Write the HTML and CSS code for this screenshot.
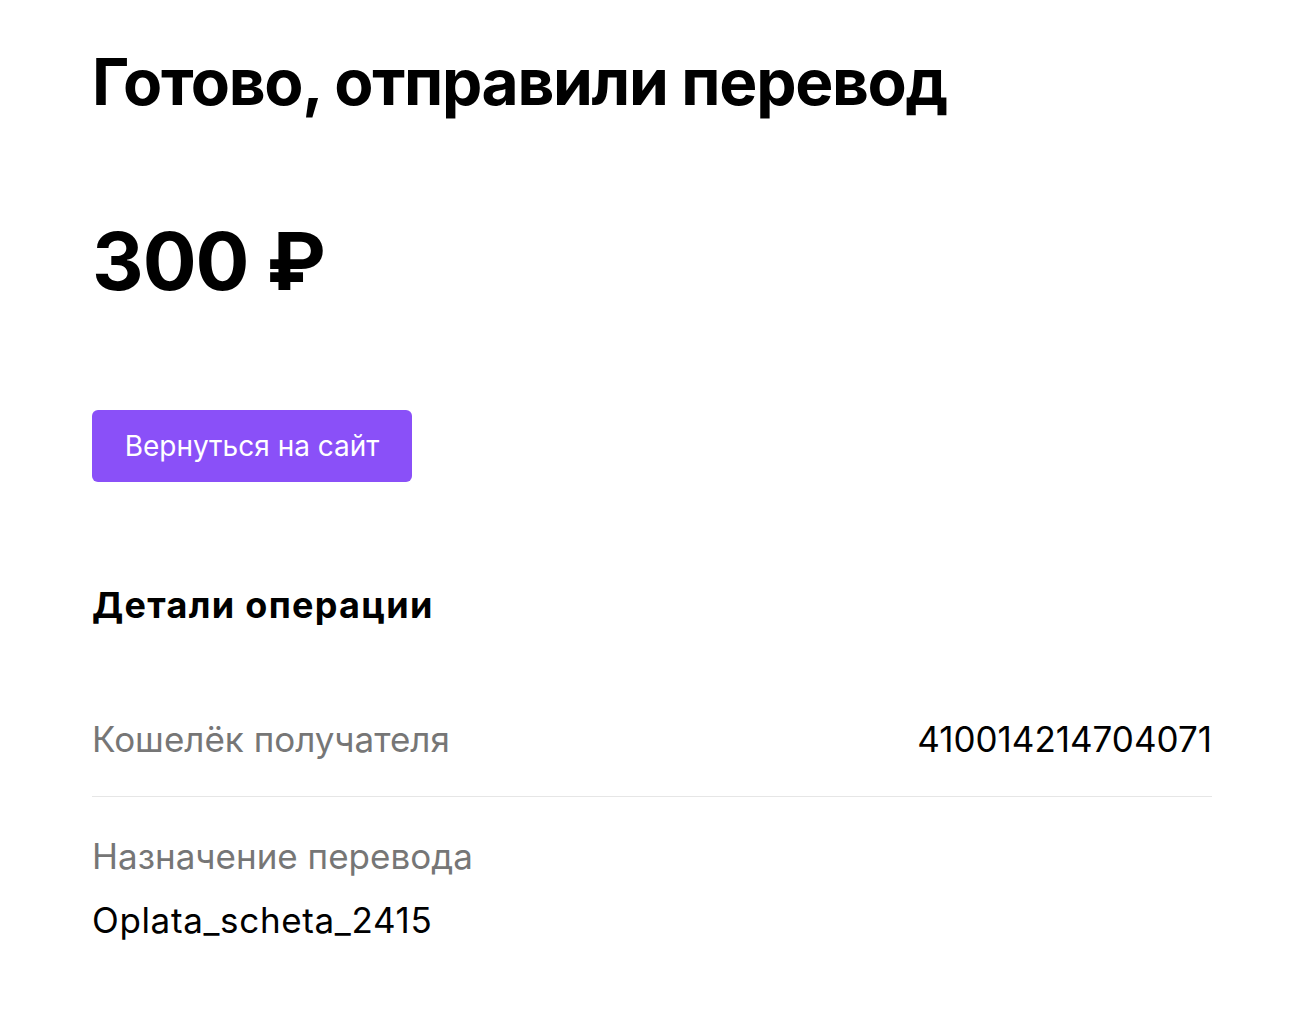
FILE: index.html
```html
<!DOCTYPE html>
<html lang="ru">
<head>
    <meta charset="UTF-8">
    <meta name="viewport" content="width=device-width, initial-scale=1.0">
    <title>Перевод отправлен</title>
    <link rel="stylesheet" href="styles.css">
</head>
<body>
    <main class="page">
        <h1 class="title">Готово, отправили перевод</h1>

        <div class="amount">300 ₽</div>

        <a class="back-button" href="#">Вернуться на сайт</a>

        <section class="details">
            <h2 class="details-title">Детали операции</h2>

            <div class="detail-row detail-row--inline">
                <span class="detail-label">Кошелёк получателя</span>
                <span class="detail-value">410014214704071</span>
            </div>

            <div class="detail-row">
                <div class="detail-label">Назначение перевода</div>
                <div class="detail-value detail-value--purpose">Oplata_scheta_2415</div>
            </div>
        </section>
    </main>
</body>
</html>
```

FILE: styles.css
```css
body {
    margin: 0;
    background-color: #fff;
    color: #000;
    font-family: Inter, "Noto Sans", sans-serif;
}

.page {
    width: 1120px;
    padding: 42px 0 40px 92px;
}

.title {
    margin: 0;
    font-size: 64px;
    line-height: 80px;
    font-weight: 700;
    letter-spacing: -1.3px;
}

.amount {
    margin-top: 91px;
    font-size: 80px;
    line-height: 96px;
    font-weight: 700;
    letter-spacing: -1px;
}

/* Primary button */
.back-button {
    display: flex;
    align-items: center;
    justify-content: center;
    width: 320px;
    height: 72px;
    margin-top: 101px;
    border-radius: 6px;
    background-color: #8a50f8;
    color: #fff;
    font-size: 28px;
    text-decoration: none;
}

.details {
    margin-top: 101px;
}

.details-title {
    margin: 0;
    font-size: 36px;
    line-height: 44px;
    font-weight: 700;
    letter-spacing: 1.3px;
}

.detail-row {
    padding: 37px 0 20px;
}

.detail-row--inline {
    display: flex;
    justify-content: space-between;
    padding: 90px 0 35px;
    border-bottom: 1px solid #e6e6e6;
}

.detail-label {
    color: #767676;
    font-size: 35px;
    line-height: 44px;
}

.detail-value {
    font-size: 35px;
    line-height: 44px;
}

.detail-row .detail-value {
    margin-top: 20px;
}

.detail-row--inline .detail-value {
    margin-top: 0;
}

.detail-value--purpose {
    letter-spacing: 0.65px;
}
```
